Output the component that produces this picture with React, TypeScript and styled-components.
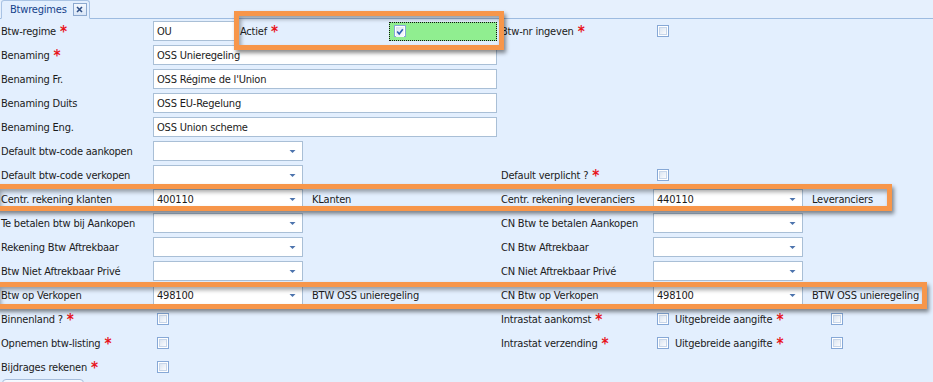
import React from "react";
import styled, { createGlobalStyle } from "styled-components";

const Global = createGlobalStyle`
  html, body { margin: 0; padding: 0; background: #e3effe; }
  body { font-family: Tahoma, "DejaVu Sans Condensed", "DejaVu Sans", sans-serif; font-size: 11px; letter-spacing: -0.2px; color: #1b1b1b; }
`;

const Page = styled.div`
  position: relative;
  width: 933px;
  height: 382px;
  overflow: hidden;
  background: #e3effe;
`;

const TabStrip = styled.div`
  height: 18px;
  border-bottom: 1px solid #9dbbe0;
  background: #e6f0fd;
  display: flex;
  align-items: flex-end;
`;

const Tab = styled.div`
  height: 17px;
  margin-left: 1px;
  margin-bottom: -1px;
  padding: 0 2px 0 8px;
  display: flex;
  align-items: center;
  gap: 6px;
  background: #e3effe;
  border: 1px solid #a9c3e4;
  border-bottom: 1px solid #e3effe;
  border-radius: 3px 3px 0 0;
  color: #15428b;
`;

const Close = styled.span`
  width: 12px;
  height: 11px;
  border: 1px solid #8da9cf;
  background: linear-gradient(#f4f8fe, #d9e6f7);
  display: flex;
  align-items: center;
  justify-content: center;
`;

const Form = styled.div`
  display: flex;
  flex-direction: column;
`;

const Row = styled.div`
  height: 24px;
  display: flex;
  align-items: center;
`;

const Half = styled.div<{ $w?: number }>`
  display: flex;
  align-items: center;
  height: 100%;
  ${(p) => (p.$w ? `width: ${p.$w}px; flex: none;` : "flex: 1;")}
`;

const Label = styled.div<{ $w: number; $pl?: number }>`
  width: ${(p) => p.$w}px;
  padding-left: ${(p) => p.$pl ?? 0}px;
  box-sizing: border-box;
  flex: none;
  white-space: nowrap;
`;

const Star = styled.span`
  color: #e8141b;
  font-size: 15px;
  font-weight: bold;
  margin-left: 4px;
  position: relative;
  top: 2px;
  line-height: 0;
`;

const Input = styled.div<{ $w: number }>`
  width: ${(p) => p.$w}px;
  height: 20px;
  box-sizing: border-box;
  border: 1px solid #a9bfd6;
  background: #fff;
  display: flex;
  align-items: center;
  padding-left: 3px;
  flex: none;
  white-space: nowrap;
`;

const Select = styled(Input)`
  justify-content: space-between;
  padding-right: 6px;
`;

const Note = styled.div<{ $ml: number }>`
  margin-left: ${(p) => p.$ml}px;
  white-space: nowrap;
`;

const Box = styled.div<{ $ml?: number }>`
  width: 12px;
  height: 12px;
  box-sizing: border-box;
  margin-left: ${(p) => p.$ml ?? 4}px;
  border: 1px solid #86a8d6;
  background: #fff;
  padding: 1px;
  flex: none;
  display: flex;
`;

const BoxInner = styled.div`
  flex: 1;
  border: 1px solid #c7d6ea;
  background: linear-gradient(135deg, #dbe5f1, #fbfcfe);
`;

const GreenField = styled.div`
  width: 108px;
  height: 19px;
  box-sizing: border-box;
  background: #90ee90;
  border: 1px dotted #111;
  display: flex;
  align-items: center;
  padding-left: 1px;
  flex: none;
`;

const Highlight = styled.div<{ $l: number; $t: number; $w: number; $h: number }>`
  position: absolute;
  left: ${(p) => p.$l}px;
  top: ${(p) => p.$t}px;
  width: ${(p) => p.$w}px;
  height: ${(p) => p.$h}px;
  box-sizing: border-box;
  border: 5px solid #f7964a;
  box-shadow: 2px 3px 4px rgba(0, 0, 0, 0.45), inset 2px 3px 4px rgba(0, 0, 0, 0.35);
  pointer-events: none;
`;

const BottomButton = styled.div`
  margin: 0 0 0 2px;
  width: 82px;
  height: 16px;
  box-sizing: border-box;
  border: 1px solid #a6bddb;
  border-radius: 4px;
  background: linear-gradient(#f7faff, #dde8f7);
`;

const Arrow = () => (
  <svg width="7" height="5" viewBox="0 0 7 5">
    <path d="M0.5 1 H6.5 L3.5 4 Z" fill="#4d74ad" />
  </svg>
);

const Check = () => (
  <Box $ml={3}>
    <svg width="10" height="10" viewBox="0 0 10 10" style={{ background: "linear-gradient(135deg,#dbe5f1,#fbfcfe)" }}>
      <path d="M1.5 4.5 L4 7.5 L8.5 1.5" stroke="#2d5fb3" strokeWidth="2" fill="none" />
    </svg>
  </Box>
);

const CheckBox = ({ ml }: { ml?: number }) => (
  <Box $ml={ml}>
    <BoxInner />
  </Box>
);

const L = ({ text, star, w = 153, pl = 1 }: { text: string; star?: boolean; w?: number; pl?: number }) => (
  <Label $w={w} $pl={pl}>
    {text}
    {star && <Star>*</Star>}
  </Label>
);

const Sel = ({ value = "", w = 150 }: { value?: string; w?: number }) => (
  <Select $w={w}>
    <span>{value}</span>
    <Arrow />
  </Select>
);

const LEFT = 501;

export default function App() {
  return (
    <Page>
      <Global />
      <TabStrip>
        <Tab>
          Btwregimes
          <Close>
            <svg width="7" height="7" viewBox="0 0 7 7">
              <path d="M1 1 L6 6 M6 1 L1 6" stroke="#2f4f86" strokeWidth="1.6" />
            </svg>
          </Close>
        </Tab>
      </TabStrip>
      <Form>
        <Row>
          <Half $w={LEFT}>
            <L text="Btw-regime" star />
            <Input $w={84}>OU</Input>
            <Label $w={152} $pl={3}>
              Actief<Star>*</Star>
            </Label>
            <GreenField>
              <Check />
            </GreenField>
          </Half>
          <Half>
            <L text="Btw-nr ingeven" star w={152} pl={0} />
            <CheckBox />
          </Half>
        </Row>
        <Row>
          <L text="Benaming" star />
          <Input $w={344}>OSS Unieregeling</Input>
        </Row>
        <Row>
          <L text="Benaming Fr." />
          <Input $w={344}>OSS Régime de l'Union</Input>
        </Row>
        <Row>
          <L text="Benaming Duits" />
          <Input $w={344}>OSS EU-Regelung</Input>
        </Row>
        <Row>
          <L text="Benaming Eng." />
          <Input $w={344}>OSS Union scheme</Input>
        </Row>
        <Row>
          <L text="Default btw-code aankopen" />
          <Sel />
        </Row>
        <Row>
          <Half $w={LEFT}>
            <L text="Default btw-code verkopen" />
            <Sel />
          </Half>
          <Half>
            <L text="Default verplicht ?" star w={152} pl={0} />
            <CheckBox />
          </Half>
        </Row>
        <Row>
          <Half $w={LEFT}>
            <L text="Centr. rekening klanten" />
            <Sel value="400110" />
            <Note $ml={9}>KLanten</Note>
          </Half>
          <Half>
            <L text="Centr. rekening leveranciers" w={152} pl={0} />
            <Sel value="440110" />
            <Note $ml={9}>Leveranciers</Note>
          </Half>
        </Row>
        <Row>
          <Half $w={LEFT}>
            <L text="Te betalen btw bij Aankopen" />
            <Sel />
          </Half>
          <Half>
            <L text="CN Btw te betalen Aankopen" w={152} pl={0} />
            <Sel />
          </Half>
        </Row>
        <Row>
          <Half $w={LEFT}>
            <L text="Rekening Btw Aftrekbaar" />
            <Sel />
          </Half>
          <Half>
            <L text="CN Btw Aftrekbaar" w={152} pl={0} />
            <Sel />
          </Half>
        </Row>
        <Row>
          <Half $w={LEFT}>
            <L text="Btw Niet Aftrekbaar Privé" />
            <Sel />
          </Half>
          <Half>
            <L text="CN Niet Aftrekbaar Privé" w={152} pl={0} />
            <Sel />
          </Half>
        </Row>
        <Row>
          <Half $w={LEFT}>
            <L text="Btw op Verkopen" />
            <Sel value="498100" />
            <Note $ml={9}>BTW OSS unieregeling</Note>
          </Half>
          <Half>
            <L text="CN Btw op Verkopen" w={152} pl={0} />
            <Sel value="498100" />
            <Note $ml={9}>BTW OSS unieregeling</Note>
          </Half>
        </Row>
        <Row>
          <Half $w={LEFT}>
            <L text="Binnenland ?" star />
            <CheckBox />
          </Half>
          <Half>
            <L text="Intrastat aankomst" star w={152} pl={0} />
            <CheckBox />
            <L text="Uitgebreide aangifte" star w={162} pl={6} />
            <CheckBox ml={0} />
          </Half>
        </Row>
        <Row>
          <Half $w={LEFT}>
            <L text="Opnemen btw-listing" star />
            <CheckBox />
          </Half>
          <Half>
            <L text="Intrastat verzending" star w={152} pl={0} />
            <CheckBox />
            <L text="Uitgebreide aangifte" star w={162} pl={6} />
            <CheckBox ml={0} />
          </Half>
        </Row>
        <Row>
          <L text="Bijdrages rekenen" star />
          <CheckBox />
        </Row>
        <BottomButton />
      </Form>
      <Highlight $l={234} $t={11} $w={270} $h={39} />
      <Highlight $l={-6} $t={184} $w={898} $h={27} />
      <Highlight $l={-6} $t={282} $w={933} $h={27} />
    </Page>
  );
}
